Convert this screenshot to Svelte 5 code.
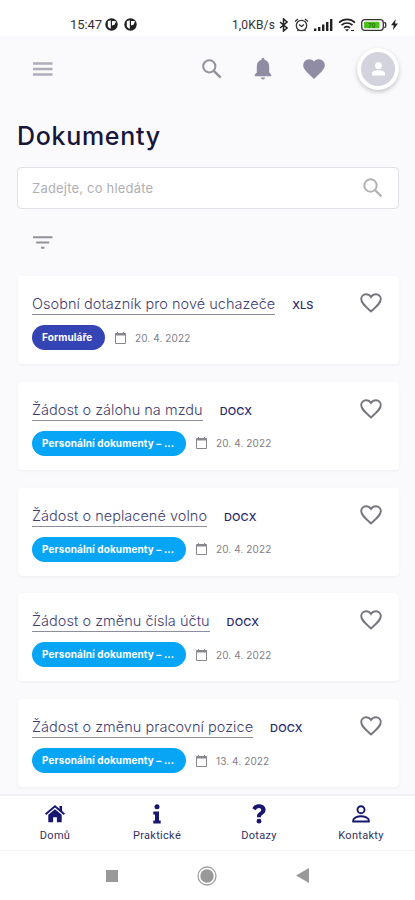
<script>
	let search = '';

	const documents = [
		{ title: 'Osobní dotazník pro nové uchazeče', type: 'XLS', category: 'Formuláře', date: '20. 4. 2022', forms: true },
		{ title: 'Žádost o zálohu na mzdu', type: 'DOCX', category: 'Personální dokumenty – ...', date: '20. 4. 2022' },
		{ title: 'Žádost o neplacené volno', type: 'DOCX', category: 'Personální dokumenty – ...', date: '20. 4. 2022' },
		{ title: 'Žádost o změnu čísla účtu', type: 'DOCX', category: 'Personální dokumenty – ...', date: '20. 4. 2022' },
		{ title: 'Žádost o změnu pracovní pozice', type: 'DOCX', category: 'Personální dokumenty – ...', date: '13. 4. 2022' }
	];
</script>

<div class="screen">
	<div class="status">
		<div class="status-left">
			<span class="clock">15:47</span>
			{#each [1, 2] as n}
				<svg width="13" height="13" viewBox="0 0 13 13">
					<circle cx="6.5" cy="6.5" r="6.2" fill="#222" />
					<path d="M2.8 3.200l3-1v8.600a4.600 4.600 0 0 1-3-2.600zM7 3h4l-1.200 3.600L7 7.400z" fill="#fff" />
				</svg>
			{/each}
		</div>
		<div class="status-right">
			<span class="speed">1,0KB/s</span>
			<svg width="9" height="14" viewBox="0 0 9 14">
				<path d="M1 4l7 6-3.5 3V1L8 4l-7 6" fill="none" stroke="#222" stroke-width="1.5" />
			</svg>
			<svg class="alarm" width="15" height="14" viewBox="0 0 15 14" fill="none" stroke="#333" stroke-width="1.3">
				<circle cx="7.5" cy="7.5" r="5.2" />
				<path d="M1 3.4l3-2.4M14 3.4L11 1M5 6.5l2.500 2 2.500-2M3.500 13l1-1M11.500 13l-1-1" />
			</svg>
			<svg class="signal" width="19" height="12" viewBox="0 0 19 12" fill="#222">
				<path d="M0 9.500h2.400V12H0zM4 8h2.400v4H4zM8 5.500h2.400V12H8zM12 3h2.400v9H12zM16 0h2.400v12H16z" />
			</svg>
			<svg class="wifi" width="18" height="14" viewBox="0 0 18 14" fill="none" stroke="#222" stroke-width="1.700">
				<path d="M1 4.600c4.700-4.200 11.300-4.200 16 0M3.500 7.200c3.300-2.800 7.700-2.800 11 0M6 9.800c1.800-1.500 4.200-1.500 6 0" />
				<path d="M7 11.200h4L9 13.500z" fill="#222" stroke="none" />
				<path d="M13 12.500h3" stroke-width="1" />
			</svg>
			<svg class="battery" width="26" height="12" viewBox="0 0 26 12">
				<rect x=".7" y=".7" width="21.6" height="10.6" rx="3" fill="#fff" stroke="#333" stroke-width="1.3" />
				<rect x="3" y="2.8" width="15.5" height="6.4" rx="1" fill="#4cc21c" />
				<path d="M23.2 3.500c2.200 0 2.200 5 0 5" fill="none" stroke="#333" stroke-width="1.300" />
				<text x="7" y="8.500" font-size="6.500" font-weight="700" fill="#287e12">70</text>
			</svg>
			<svg width="7" height="11" viewBox="0 0 7 11"><path d="M4.800 0L0 6.200h2.700L2 11l5-6.400H4z" fill="#222" /></svg>
		</div>
	</div>

	<header>
		<button class="menu" aria-label="Menu">
			<svg width="20" height="15" viewBox="0 0 20 15"><path d="M0 1.500h19.500M0 7h19.500M0 12.500h19.500" stroke="#aeadb9" stroke-width="2.500" /></svg>
		</button>
		<div class="actions">
			<svg width="20" height="20" viewBox="0 0 20 20" fill="none" stroke="#92919c" stroke-width="2">
				<circle cx="7.300" cy="7.300" r="6.100" /><path d="M11.800 11.800l6.800 6.800" stroke-width="2.400" />
			</svg>
			<svg class="bell" width="18" height="22" viewBox="0 0 18 22" fill="#8f8ca4">
				<path d="M9 0c1 0 1.500.7 1.500 1.700 3.200.8 4.700 3.400 4.700 6.600v6.200l2 2v1.700H.8v-1.700l2-2V8.300c0-3.200 1.500-5.800 4.700-6.600C7.500.7 8 0 9 0zM7 19.400h4a2 2 0 0 1-4 0z" />
			</svg>
			<svg class="fav" width="22" height="20" viewBox="0 0 22 20" fill="#8f8ca4">
				<path d="M11 20L9.400 18.500C3.700 13.300.2 10.200.2 6.100A5.800 5.800 0 0 1 6.100.2C8 .2 9.800 1 11 2.500 12.200 1 14 .2 15.900.2a5.800 5.800 0 0 1 5.900 5.900c0 4.100-3.500 7.200-9.200 12.400z" />
			</svg>
			<div class="avatar">
				<svg width="13" height="14" viewBox="0 0 13 14" fill="#fff">
					<circle cx="6.500" cy="3.700" r="3.400" /><path d="M0 13.500v-2.300c0-2 3.500-3 6.500-3s6.500 1 6.500 3v2.300z" />
				</svg>
			</div>
		</div>
	</header>

	<main>
		<h1>Dokumenty</h1>
		<label class="search">
			<input bind:value={search} placeholder="Zadejte, co hledáte" />
			<svg width="20" height="20" viewBox="0 0 20 20" fill="none" stroke="#b3b3b5" stroke-width="2">
				<circle cx="7.500" cy="7.500" r="6.200" /><path d="M12 12l6.500 6.500" stroke-width="2.300" />
			</svg>
		</label>
		<button class="filter" aria-label="Filtr">
			<svg width="20" height="13" viewBox="0 0 20 13"><path d="M0 1.200h19.500M3.200 6.500h13M8 11.800h3.500" stroke="#92929a" stroke-width="2" /></svg>
		</button>

		<div class="list">
			{#each documents as doc}
				<article>
					<div class="row">
						<a href="#doc">{doc.title}</a>
						<span class="type">{doc.type}</span>
						<svg class="heart" width="22" height="20" viewBox="0 0 22 20" fill="none" stroke="#77767e" stroke-width="1.900">
							<path d="M11 18.500L9.400 17C4.400 12.500 1.200 9.700 1.200 6.100A4.800 4.800 0 0 1 6.100 1.200C8 1.200 9.900 2.300 11 4c1.100-1.700 3-2.800 4.900-2.800a4.800 4.800 0 0 1 4.900 4.900c0 3.600-3.200 6.400-8.200 10.900z" />
						</svg>
					</div>
					<div class="meta">
						<span class="tag" class:forms={doc.forms}>{doc.category}</span>
						<svg width="11" height="12" viewBox="0 0 11 12" fill="none" stroke="#88878d" stroke-width="1">
							<path d="M.5 1.500h10v10H.5z" /><path d="M.5 2.500h10" stroke-width="2" /><path d="M2.500 0v2M8.500 0v2" />
						</svg>
						<span class="date">{doc.date}</span>
					</div>
				</article>
			{/each}
		</div>
	</main>

	<nav class="tabs">
		<div class="tab home">
			<svg width="20" height="18" viewBox="0 0 20 18" fill="#171770">
				<path d="M10 4.200l6.700 5.600v7.400h-4.800v-5H8.100v5H3.300V9.800z" />
				<path d="M.6 9.200L10 1.300l9.400 7.900" fill="none" stroke="#171770" stroke-width="1.900" /><path d="M14.500 1h2.600v6l-2.600-2z" />
			</svg>
			<span>Domů</span>
		</div>
		<div class="tab info">
			<svg width="8" height="20" viewBox="0 0 8 20" fill="#171770">
				<circle cx="4" cy="2.700" r="2.500" /><path d="M.3 7.400H6v9.200h1.700v2.900H.3v-2.900H2v-6.200H.3z" />
			</svg>
			<span>Praktické</span>
		</div>
		<div class="tab faq">
			<svg width="14" height="20" viewBox="0 0 14 20" fill="#171770">
				<path d="M.4 4.200C1.800 1.500 4 .2 7.200.2c3.500 0 6.400 2.200 6.400 5.500 0 4.500-4.600 4.700-4.600 7.100v.5H5v-1.100c0-3.600 4.200-4 4.200-6.200 0-1.400-1-2.100-2.300-2.100-1.600 0-2.500.9-3.500 2.400z" />
				<circle cx="7" cy="17.200" r="2.400" />
			</svg>
			<span>Dotazy</span>
		</div>
		<div class="tab contacts">
			<svg width="18" height="18" viewBox="0 0 18 18" fill="none" stroke="#171770" stroke-width="1.900">
				<circle cx="9" cy="4.700" r="3.500" /><path d="M1.200 16.500v-1.300c0-2.300 4.300-3.900 7.800-3.900s7.800 1.600 7.800 3.900v1.300z" />
			</svg>
			<span>Kontakty</span>
		</div>
	</nav>

	<div class="system">
		<span class="recent"></span>
		<svg width="20" height="20" viewBox="0 0 20 20"><circle cx="10" cy="10" r="9" fill="#fff" stroke="#a0a0a0" stroke-width="1.300" /><circle cx="10" cy="10" r="6.700" fill="#999" /></svg>
		<svg width="13" height="15" viewBox="0 0 13 15"><path d="M13 0v15L0 7.500z" fill="#999" /></svg>
	</div>
</div>

<style>
:global(body) {
	overflow: hidden;
}

.screen {
	background-color: #fafafc;
	box-sizing: border-box;
	color: #25254f;
	display: flex;
	flex-direction: column;
	font-family: Inter, "Open Sans", sans-serif;
	height: 900px;
	overflow: hidden;
	width: 415px;
}

svg {
	display: block;
	flex: none;
}

button {
	background: none;
	border: none;
	padding: 0;
}

.status {
	background-color: #fff;
	box-sizing: border-box;
	color: #333;
	display: flex;
	flex: none;
	font-family: Roboto, sans-serif;
	height: 36px;
	justify-content: space-between;
	padding: 13px 17px 0 70px;
}

.status-left,
.status-right {
	align-items: center;
	display: flex;
	height: 23px;
}

.clock {
	font-size: 13px;
	letter-spacing: -0.1px;
	margin-right: 3px;
}

.status-left svg + svg {
	margin-left: 6px;
}

.speed {
	font-size: 12px;
	letter-spacing: 0.15px;
	margin-right: 4px;
}

.alarm {
	margin-left: 6px;
}

.signal {
	margin-left: 5px;
}

.wifi {
	margin-left: 5px;
}

.battery {
	margin: 0 4px 0 5px;
}

header {
	align-items: center;
	display: flex;
	flex: none;
	height: 66px;
	justify-content: space-between;
	padding: 0 16px 0 33px;
}

.actions {
	align-items: center;
	display: flex;
}

.bell {
	margin-left: 32px;
}

.fav {
	margin: 0 32px 0 31px;
}

.avatar {
	align-items: center;
	background-color: #d2d3dc;
	border: 4px solid #fff;
	border-radius: 50%;
	box-shadow: 0 2px 4px rgba(40, 40, 60, 0.25);
	display: flex;
	height: 34px;
	justify-content: center;
	width: 34px;
}

main {
	flex: 1;
	min-height: 0;
	overflow: hidden;
	padding: 18px 16px 0 17px;
}

h1 {
	color: #17153a;
	font-size: 25px;
	font-weight: 500;
	letter-spacing: 0.7px;
	line-height: 32px;
	margin: 0 0 15px;
}

.search {
	align-items: center;
	background-color: #fff;
	border: 1px solid #e1e2e9;
	border-radius: 4px;
	box-sizing: border-box;
	display: flex;
	height: 42px;
	padding: 0 15px 0 14px;
}

input {
	border: none;
	flex: 1;
	font-family: inherit;
	font-size: 13px;
	letter-spacing: 0.2px;
	min-width: 0;
	outline: none;
	padding: 0;
}

input::placeholder {
	color: #b0b0b4;
}

.filter {
	display: block;
	margin: 27px 0 0 16px;
}

.list {
	display: flex;
	flex-direction: column;
	gap: 17.8px;
	margin: 27px 0 0 1px;
}

article {
	background-color: #fff;
	border-radius: 4px;
	box-shadow: 0 1px 3px rgba(40, 40, 80, 0.06);
	box-sizing: border-box;
	height: 88px;
	padding: 17px 17px 0 14px;
}

.row {
	align-items: flex-start;
	display: flex;
}

a {
	border-bottom: 1px solid #8d8d9b;
	color: #3f3e70;
	font-size: 14.5px;
	font-weight: 300;
	letter-spacing: 0.03px;
	line-height: 21px;
	text-decoration: none;
	white-space: nowrap;
}

.type {
	color: #28286b;
	font-size: 11px;
	font-weight: 500;
	letter-spacing: 0.1px;
	line-height: 25px;
	margin-left: 17px;
}

.heart {
	margin-left: auto;
}

.meta {
	align-items: center;
	display: flex;
	margin-top: 7px;
}

.tag {
	background-color: #06a5f5;
	border-radius: 13px;
	box-sizing: border-box;
	color: #fff;
	font-size: 10px;
	font-weight: 700;
	height: 25px;
	letter-spacing: 0.1px;
	line-height: 25px;
	margin-right: 10px;
	padding-left: 10px;
	white-space: nowrap;
	width: 154px;
}

.tag.forms {
	background-color: #3444b5;
	width: 73px;
}

.date {
	color: #818087;
	font-size: 10px;
	letter-spacing: 0.1px;
	margin-left: 9px;
}

.tabs {
	background-color: #fff;
	border-top: 2px solid #f1f1f4;
	box-sizing: border-box;
	display: flex;
	flex: none;
	height: 56px;
	padding: 0 3px 0 4px;
}

.tab {
	align-items: center;
	color: #32315f;
	display: flex;
	flex: 1;
	flex-direction: column;
	font-family: Roboto, sans-serif;
	font-size: 11px;
	justify-content: flex-end;
	letter-spacing: 0.3px;
	line-height: 13px;
	padding-bottom: 8px;
}

.tab svg {
	margin-bottom: 6px;
}

.tab.info svg,
.tab.faq svg {
	margin-bottom: 5px;
}

.system {
	align-items: center;
	background-color: #fff;
	border-top: 1px solid #f4f4f5;
	box-sizing: border-box;
	display: flex;
	flex: none;
	height: 50px;
	justify-content: space-between;
	padding: 0 106px 0 106px;
}

.recent {
	background-color: #999;
	height: 12px;
	width: 12px;
}
</style>
